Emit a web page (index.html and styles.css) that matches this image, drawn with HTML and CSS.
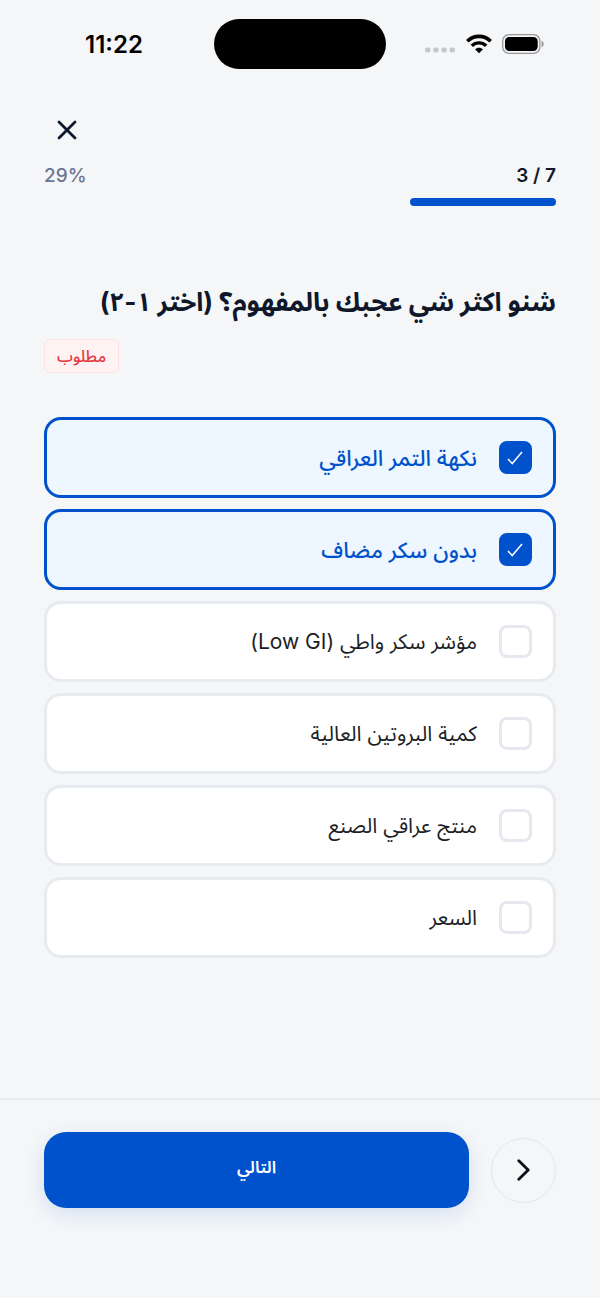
FILE: index.html
```html
<!DOCTYPE html>
<html lang="ar" dir="rtl">
<head>
<meta charset="utf-8">
<meta name="viewport" content="width=device-width, initial-scale=1">
<title>استبيان</title>
<link rel="stylesheet" href="styles.css">
</head>
<body>
<div class="screen">
  <div class="status" dir="ltr">
    <span class="time">11:22</span>
    <span class="island"></span>
    <span class="indicators">
      <svg class="dots" width="31" height="6" viewBox="0 0 31 6" fill="#c6c7c9"><rect x="0" y="0.5" width="5.4" height="5" rx="1.8"/><rect x="8.2" y="0.5" width="5.4" height="5" rx="1.8"/><rect x="16.4" y="0.5" width="5.4" height="5" rx="1.8"/><rect x="24.6" y="0.5" width="5.4" height="5" rx="1.8"/></svg>
      <svg width="26" height="20" viewBox="0 0 26 20" fill="none" stroke="#000"><path d="M1.3 7.3C8 0.7 18 0.7 24.7 7.3" stroke-width="3.6"/><path d="M5.8 11.8C9.9 7.9 16.1 7.9 20.2 11.8" stroke-width="3.4"/><path d="M9 15.2C11.2 13.1 14.8 13.1 17 15.2L13 19.3Z" fill="#000" stroke="none"/></svg>
      <svg width="42" height="20" viewBox="0 0 42 20"><rect x="0.7" y="0.7" width="37.2" height="18.6" rx="6.2" fill="none" stroke="#97989a" stroke-width="1.3"/><rect x="3" y="3" width="32.7" height="14" rx="4.2"/><path d="M39.6 6.8C42.4 7.4 42.4 12.6 39.6 13.2Z" fill="#97989a"/></svg>
    </span>
  </div>

  <header class="top">
    <button class="close" type="button" aria-label="إغلاق">
      <svg width="20" height="20" viewBox="0 0 20 20" fill="none" stroke="#0f172a" stroke-width="2.8" stroke-linecap="round"><path d="M2 2L18 18M18 2L2 18"/></svg>
    </button>
    <div class="counts">
      <span class="step" dir="ltr">3 / 7</span>
      <span class="percent" dir="ltr">29%</span>
    </div>
    <div class="track" role="progressbar" aria-label="التقدم" aria-valuemin="0" aria-valuemax="7" aria-valuenow="3"><div class="fill" style="width: 28.57%"></div></div>
  </header>

  <main class="question">
    <h1 class="title" id="question">شنو اكثر شي عجبك بالمفهوم؟ (اختر ١-٢)</h1>
    <span class="required">مطلوب</span>
    <div class="options" role="group" aria-labelledby="question">
      <label class="option"><input class="box" type="checkbox" checked><span>نكهة التمر العراقي</span><svg class="tick" width="16" height="14" viewBox="0 0 16 14"><path d="M1 8L5.2 12.5L15 1"/></svg></label>
      <label class="option"><input class="box" type="checkbox" checked><span>بدون سكر مضاف</span><svg class="tick" width="16" height="14" viewBox="0 0 16 14"><path d="M1 8L5.2 12.5L15 1"/></svg></label>
      <label class="option"><input class="box" type="checkbox"><span>مؤشر سكر واطي (Low GI)</span></label>
      <label class="option"><input class="box" type="checkbox"><span>كمية البروتين العالية</span></label>
      <label class="option"><input class="box" type="checkbox"><span>منتج عراقي الصنع</span></label>
      <label class="option"><input class="box" type="checkbox"><span>السعر</span></label>
    </div>
  </main>

  <footer class="actions">
    <button class="back" type="button" aria-label="السابق">
      <svg width="14" height="22" viewBox="0 0 14 22" fill="none" stroke="#0b0f19" stroke-width="2.8" stroke-linecap="round" stroke-linejoin="round"><path d="M1.8 1.8L11.2 11L1.8 20.2"/></svg>
    </button>
    <button class="next" type="button">التالي</button>
  </footer>
</div>
</body>
</html>
```
FILE: styles.css
```css
* {
  box-sizing: border-box;
}

body {
  margin: 0;
  background: #f4f6f8;
  color: #0f172a;
  font-family: Inter, "Noto Sans Arabic", "DejaVu Sans", sans-serif;
}

button {
  font: inherit;
  padding: 0;
  cursor: pointer;
}

svg {
  display: block;
  flex: none;
}

.screen {
  display: flex;
  flex-direction: column;
  min-height: 100vh;
}

.status {
  display: grid;
  grid-template-columns: 1fr 172px 1fr;
  align-items: center;
  height: 88px;
  color: #000;
}

.time {
  justify-self: center;
  padding-left: 14px;
  font-size: 24px;
  font-weight: 600;
}

.island {
  height: 50px;
  border-radius: 25px;
  background: #000;
}

.indicators {
  display: flex;
  align-items: center;
  gap: 10px;
  padding-left: 39px;
}

.dots {
  margin-top: 12px;
}

.top {
  padding: 20px 44px 0;
}

.close {
  display: grid;
  place-items: center;
  width: 46px;
  height: 44px;
  margin-right: auto;
  border: 0;
  background: none;
}

.counts {
  display: flex;
  justify-content: space-between;
  margin: 12px 0 10px;
  font-size: 19px;
  line-height: 24px;
  font-weight: 600;
}

.percent {
  color: #6b7590;
  font-weight: 500;
}

.track {
  height: 8px;
  border-radius: 4px;
}

.fill {
  height: 100%;
  border-radius: 4px;
  background: #0052cc;
}

.question {
  display: flex;
  flex: 1;
  flex-direction: column;
  padding: 76px 44px 40px;
}

.title {
  margin: 0;
  font-size: 26px;
  line-height: 40px;
  font-weight: 700;
}

.required {
  align-self: flex-end;
  margin: 17px 0 44px;
  padding: 0 12px;
  border: 1px solid #fee2e2;
  border-radius: 6px;
  background: #fef2f2;
  color: #e5393f;
  font-size: 16px;
  line-height: 32px;
  font-weight: 500;
}

.options {
  display: grid;
  gap: 11px;
}

.option {
  display: flex;
  align-items: center;
  gap: 22px;
  position: relative;
  min-height: 81px;
  padding: 0 21px;
  border: 3px solid #e7eaee;
  border-radius: 17px;
  background: #fff;
  color: #1c1e26;
  font-size: 21px;
  line-height: 32px;
  cursor: pointer;
}

.option:has(.box:checked) {
  border-color: #0052cc;
  background: #eef7ff;
  color: #0052cc;
  font-size: 22px;
  font-weight: 500;
}

.box {
  appearance: none;
  flex: none;
  width: 33px;
  height: 33px;
  margin: 0;
  border: 3px solid #e6e8f0;
  border-radius: 8px;
  background: #fff;
}

.box:checked {
  border-color: #0052cc;
  background: #0052cc;
}

.tick {
  position: absolute;
  right: 30px;
  top: 31px;
  fill: none;
  stroke: #fff;
  stroke-width: 1.5;
  pointer-events: none;
}

.actions {
  display: flex;
  align-items: center;
  gap: 22px;
  padding: 32px 44px 90px;
  border-top: 2px solid #e8eaed;
}

.back {
  display: grid;
  place-items: center;
  width: 65px;
  height: 65px;
  border: 1px solid #e4e6e9;
  border-radius: 50%;
  background: #f5f6f8;
}

.next {
  flex: 1;
  height: 76px;
  padding-bottom: 4px;
  border: 0;
  border-radius: 22px;
  background: #0052cc;
  box-shadow: 0 6px 20px rgba(0, 82, 204, 0.13);
  color: #fff;
  font-size: 17px;
  font-weight: 600;
}
```
